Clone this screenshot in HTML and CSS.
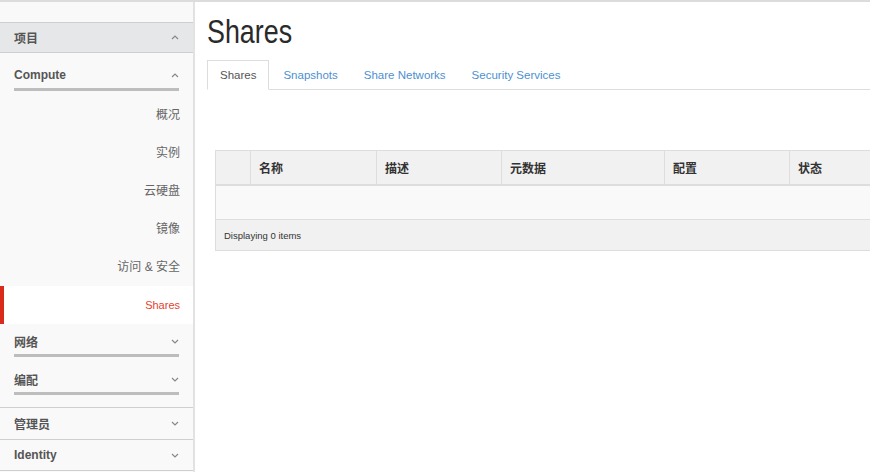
FILE: index.html
```html
<html>
    <head>
        <title>Shares</title>
        <link rel="stylesheet" href="styles.css">
    </head>
    <body>
        <div class="page">
            <nav class="sidebar">
                <div class="panel-head">
                    <span>项目</span>
                    <svg class="caret" width="8" height="5" viewBox="0 0 8 5"><path d="M1 4L4 1l3 3"/></svg>
                </div>
                <div class="panel-body">
                    <div class="group group-open">
                        <div class="group-head">
                            <span>Compute</span>
                            <svg class="caret" width="8" height="5" viewBox="0 0 8 5"><path d="M1 4L4 1l3 3"/></svg>
                        </div>
                        <ul class="nav-items">
                            <li>概况</li>
                            <li>实例</li>
                            <li>云硬盘</li>
                            <li>镜像</li>
                            <li>访问 &amp; 安全</li>
                            <li class="active">Shares</li>
                        </ul>
                    </div>
                    <div class="group group-tight">
                        <div class="group-head">
                            <span>网络</span>
                            <svg class="caret" width="8" height="5" viewBox="0 0 8 5"><path d="M1 1l3 3 3-3"/></svg>
                        </div>
                    </div>
                    <div class="group">
                        <div class="group-head">
                            <span>编配</span>
                            <svg class="caret" width="8" height="5" viewBox="0 0 8 5"><path d="M1 1l3 3 3-3"/></svg>
                        </div>
                    </div>
                </div>
                <div class="panel-head panel-closed">
                    <span>管理员</span>
                    <svg class="caret" width="8" height="5" viewBox="0 0 8 5"><path d="M1 1l3 3 3-3"/></svg>
                </div>
                <div class="panel-head panel-closed">
                    <span>Identity</span>
                    <svg class="caret" width="8" height="5" viewBox="0 0 8 5"><path d="M1 1l3 3 3-3"/></svg>
                </div>
            </nav>
            <main class="content">
                <h1 class="page-title">Shares</h1>
                <ul class="tabs">
                    <li class="tab active">Shares</li>
                    <li class="tab">Snapshots</li>
                    <li class="tab">Share Networks</li>
                    <li class="tab">Security Services</li>
                </ul>
                <table class="datatable">
                    <thead>
                        <tr>
                            <th class="col-check"></th>
                            <th class="col-name">名称</th>
                            <th class="col-desc">描述</th>
                            <th class="col-meta">元数据</th>
                            <th class="col-conf">配置</th>
                            <th class="col-status">状态</th>
                        </tr>
                    </thead>
                    <tbody>
                        <tr class="empty-row"><td colspan="6"></td></tr>
                    </tbody>
                    <tfoot>
                        <tr><td colspan="6">Displaying 0 items</td></tr>
                    </tfoot>
                </table>
            </main>
        </div>
    </body>
</html>
```

FILE: styles.css
```css
* {
box-sizing: border-box;
}
body {
margin: 0;
border-top: 2px solid #dcdcdc;
font-family: "Liberation Sans", "Noto Sans CJK SC", sans-serif;
color: #333;
background: #fff;
height: 472px;
overflow: hidden;
}
.page {
display: flex;
height: 470px;
}
.sidebar {
flex: 0 0 195px;
background: #f9f9f9;
border-right: 2px solid #e2e2e2;
padding-top: 20px;
}
.panel-head {
display: flex;
justify-content: space-between;
align-items: center;
height: 31px;
padding: 0 14px;
background: #e6e7e8;
border-top: 1px solid #cfcfcf;
border-bottom: 1px solid #cfcfcf;
font-size: 12px;
font-weight: bold;
color: #555;
}
.panel-closed {
background: #f9f9f9;
border-bottom: none;
height: 32px;
}
.panel-closed + .panel-closed {
border-bottom: 1px solid #cfcfcf;
}
.caret {
fill: none;
stroke: #888;
stroke-width: 1.2;
}
.panel-body {
padding-bottom: 12px;
}
.group {
padding-top: 5px;
}
.group-tight {
padding-top: 0;
}
.group-head {
display: flex;
justify-content: space-between;
align-items: center;
height: 33px;
margin: 0 14px;
padding-top: 4px;
border-bottom: 3px solid #bdbdbd;
font-size: 12px;
font-weight: bold;
color: #555;
}
.nav-items {
list-style: none;
margin: 5px 0 0;
padding: 0;
}
.nav-items li {
height: 38px;
line-height: 38px;
text-align: right;
padding-right: 13px;
font-size: 12px;
color: #666;
}
.nav-items li.active {
background: #fff;
color: #e2432d;
border-left: 4px solid #da2a1c;
font-size: 11px;
}
.content {
flex: 1;
min-width: 0;
overflow: hidden;
padding-left: 12px;
}
.page-title {
margin: 11px 0 11px;
font-size: 34px;
font-weight: normal;
line-height: 36px;
color: #2a2a2a;
transform: scaleX(0.79);
transform-origin: left center;
}
.tabs {
display: flex;
list-style: none;
margin: 0;
padding: 0;
border-bottom: 1px solid #ddd;
}
.tab {
height: 29px;
line-height: 30px;
padding: 0 12px;
font-size: 11.5px;
color: #4d90d0;
margin-right: 2px;
}
.tab.active {
color: #555;
background: #fff;
border: 1px solid #ddd;
border-bottom-color: #fff;
margin-bottom: -1px;
height: 30px;
line-height: 29px;
}
.datatable {
margin: 60px 0 0 8px;
border-collapse: collapse;
width: 720px;
font-size: 12px;
}
.datatable th {
height: 34px;
background: #f1f1f1;
border: 1px solid #ddd;
border-bottom-width: 2px;
text-align: left;
padding: 0 8px;
color: #333;
}
.col-check { width: 35px; }
.col-name { width: 126px; }
.col-desc { width: 125px; }
.col-meta { width: 163px; }
.col-conf { width: 125px; }
.empty-row td {
height: 35px;
background: #f9f9f9;
border: 1px solid #ddd;
}
.datatable tfoot td {
height: 31px;
background: #f1f1f1;
border: 1px solid #ddd;
padding: 0 8px;
font-size: 9.5px;
color: #333;
}
```
